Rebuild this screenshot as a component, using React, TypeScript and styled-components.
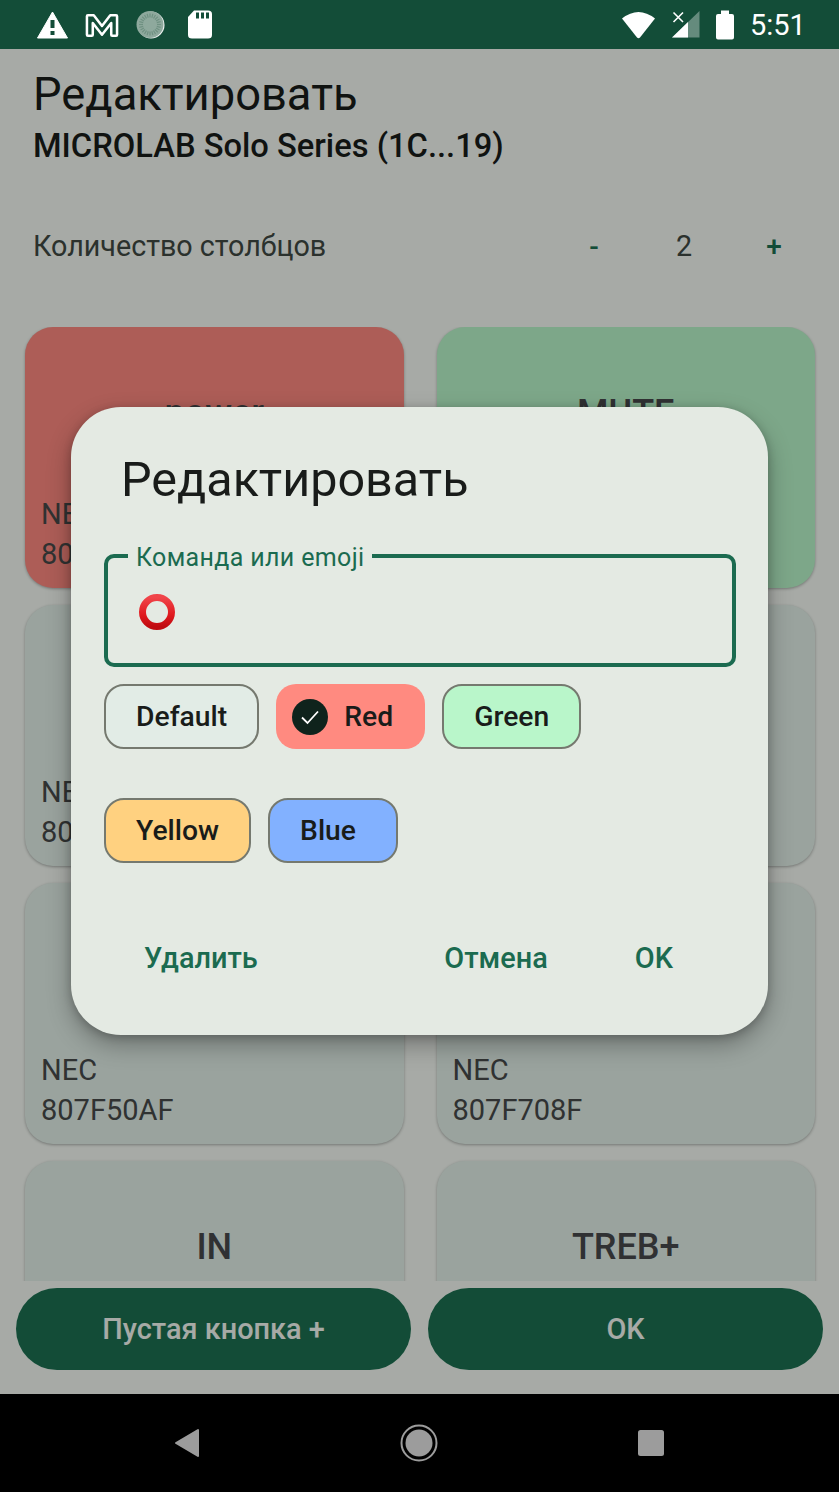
import React from "react";
import styled, { createGlobalStyle } from "styled-components";

const Global = createGlobalStyle`
  html, body { margin: 0; padding: 0; background: #000; }
  body { font-family: Roboto, "Noto Sans", sans-serif; color: #191c1a; }
  * { box-sizing: border-box; }
`;

const Screen = styled.div`
  width: 839px;
  height: 1492px;
  display: flex;
  flex-direction: column;
  overflow: hidden;
`;

const StatusBar = styled.div`
  height: 49px;
  flex: none;
  background: #134d38;
  display: flex;
  align-items: center;
  justify-content: space-between;
  padding: 0 36px 0 37px;
`;

const StatusGroup = styled.div`
  display: flex;
  align-items: center;
  gap: 17px;
`;

const StatusGroupRight = styled(StatusGroup)`
  gap: 16px;
`;

const Clock = styled.span`
  color: #fff;
  font-size: 29px;
  line-height: 34px;
  width: 53px;
  white-space: nowrap;
`;

const Main = styled.main`
  position: relative;
  flex: 1;
  min-height: 0;
  display: flex;
  flex-direction: column;
  background: #f6fbf5;
`;

const Header = styled.header`
  flex: none;
  padding: 18px 20px 61px 33px;
`;

const PageTitle = styled.h1`
  margin: 0;
  font-size: 45.3px;
  line-height: 56px;
  font-weight: 400;
`;

const DeviceName = styled.h2`
  margin: 1px 0 0;
  font-size: 32.7px;
  line-height: 44px;
  font-weight: 500;
`;

const ColumnsRow = styled.div`
  margin-top: 58px;
  display: flex;
  align-items: center;
  justify-content: space-between;
  height: 40px;
`;

const ColumnsLabel = styled.span`
  font-size: 28.7px;
  color: #404943;
`;

const Stepper = styled.div`
  display: grid;
  grid-template-columns: repeat(3, 90px);
  justify-items: center;
  align-items: center;
`;

const StepButton = styled.span`
  font-size: 28px;
  font-weight: 500;
  color: #1c7152;
`;

const StepValue = styled.span`
  font-size: 28.7px;
  color: #404943;
`;

const CardGrid = styled.div`
  flex: 1;
  min-height: 0;
  overflow: hidden;
  display: grid;
  grid-template-columns: 1fr 1fr;
  grid-auto-rows: 261px;
  column-gap: 33px;
  row-gap: 17px;
  padding: 0 24px 0 25px;
`;

const Card = styled.div<{ $bg: string }>`
  background: ${(p) => p.$bg};
  border-radius: 28px;
  box-shadow: 0 1px 3px rgba(0, 0, 0, 0.3);
  display: flex;
  flex-direction: column;
  justify-content: space-between;
  padding: 63px 16px 14px;
`;

const CardTitle = styled.div`
  font-size: 36px;
  line-height: 46px;
  font-weight: 500;
  text-align: center;
  color: #47494c;
`;

const CardMeta = styled.div`
  font-size: 29px;
  line-height: 40px;
  color: #474a4a;
`;

const Footer = styled.footer`
  flex: none;
  display: grid;
  grid-template-columns: 1fr 1fr;
  column-gap: 17px;
  padding: 7px 16px 24px;
`;

const FooterButton = styled.div`
  height: 82px;
  border-radius: 41px;
  background: #1c7152;
  color: #f6fbf5;
  font-size: 28.9px;
  font-weight: 500;
  display: flex;
  align-items: center;
  justify-content: center;
`;

const Scrim = styled.div`
  position: absolute;
  inset: 0;
  padding-bottom: 1px;
  background: rgba(0, 0, 0, 0.32);
  display: flex;
  align-items: center;
  justify-content: center;
`;

const Dialog = styled.section`
  width: 697px;
  height: 628px;
  border-radius: 50px;
  background: #e4eae3;
  box-shadow: 0 10px 24px rgba(0, 0, 0, 0.3), 0 2px 8px rgba(0, 0, 0, 0.2);
  padding: 43px 32px 59px 33px;
  display: flex;
  flex-direction: column;
`;

const DialogTitle = styled.h3`
  margin: 0 0 0 17px;
  font-size: 48.5px;
  line-height: 60px;
  font-weight: 400;
  color: #191c1a;
`;

const Field = styled.fieldset`
  margin: 29px 0 0;
  padding: 20px 0 30px 30px;
  min-width: 0;
  border: 4px solid #1b6b50;
  border-radius: 10px;
  height: 128px;
`;

const FieldLabel = styled.legend`
  margin-left: -10px;
  padding: 4px 8px 0;
  font-size: 25px;
  line-height: 30px;
  color: #1b6b50;
  letter-spacing: 0.35px;
`;

const Chips = styled.div`
  margin-top: 17px;
  display: flex;
  flex-wrap: wrap;
  column-gap: 17px;
  row-gap: 49px;
`;

const Chip = styled.div<{ $bg: string; $selected?: boolean; $minWidth?: number }>`
  height: 65px;
  border-radius: 20px;
  background: ${(p) => p.$bg};
  border: ${(p) => (p.$selected ? "none" : "2px solid #75796f")};
  padding: ${(p) => (p.$selected ? "0 32px 0 16px" : "0 30px")};
  min-width: ${(p) => (p.$minWidth ? `${p.$minWidth}px` : "0")};
  display: flex;
  align-items: center;
  gap: 16px;
  font-size: 28.3px;
  font-weight: 500;
  color: #191c1a;
`;

const Actions = styled.div`
  margin-top: auto;
  display: flex;
  align-items: center;
  gap: 87px;
  padding: 0 63px 0 40px;
`;

const ActionButton = styled.span<{ $pushLeft?: boolean }>`
  font-size: 28.9px;
  line-height: 36px;
  font-weight: 500;
  color: #1b6b50;
  ${(p) => (p.$pushLeft ? "margin-right: auto;" : "")}
`;

const NavBar = styled.nav`
  height: 98px;
  flex: none;
  background: #000;
  display: grid;
  grid-template-columns: 375px 88px 376px;
  align-items: center;
  justify-items: center;
`;

const BackSlot = styled.div`
  justify-self: end;
  margin-right: 175px;
  display: flex;
`;

const HomeSlot = styled.div`
  display: flex;
`;

const RecentSlot = styled.div`
  justify-self: start;
  margin-left: 175px;
  display: flex;
`;

const ticks = Array.from({ length: 24 }, (_, i) => i * 15);

export default function App() {
  return (
    <Screen>
      <Global />
      <StatusBar>
        <StatusGroup>
          <svg width="31" height="28" viewBox="0 0 31 28">
            <path d="M15.5 1 L30.5 27 L0.5 27 Z" fill="#fff" stroke="#fff" strokeLinejoin="round" />
            <rect x="13.5" y="9" width="4" height="8" fill="#134d38" />
            <rect x="13.5" y="20" width="4" height="4" fill="#134d38" />
          </svg>
          <svg width="34" height="26" viewBox="0 0 35 26">
            <path
              d="M3 3 L9 3 L17.5 14 L26 3 L32 3 Q33 3 33 4 L33 23 Q33 24 32 24 L28 24 Q27 24 27 23 L27 11 L17.5 23 L8 11 L8 23 Q8 24 7 24 L3 24 Q2 24 2 23 L2 4 Q2 3 3 3 Z"
              fill="none"
              stroke="#fff"
              strokeWidth="2.6"
              strokeLinejoin="round"
            />
          </svg>
          <svg width="30" height="28" viewBox="0 0 30 28">
            <circle cx="15" cy="14" r="13.5" fill="#fff" opacity="0.95" />
            <circle cx="14" cy="13.5" r="13.5" fill="#8ea99d" />
            {ticks.map((a) => (
              <line
                key={a}
                x1="14"
                y1="2.5"
                x2="14"
                y2="6.5"
                stroke="#6f9182"
                strokeWidth="1.2"
                transform={`rotate(${a} 14 13.5)`}
              />
            ))}
          </svg>
          <svg width="30" height="29" viewBox="0 0 30 29">
            <path
              d="M11 0.5 L25 0.5 Q29 0.5 29 4 L29 25 Q29 28.5 25 28.5 L9 28.5 Q5 28.5 5 25 L5 7 Z"
              fill="#fff"
            />
            <rect x="13" y="2.5" width="3" height="6" fill="#134d38" />
            <rect x="18" y="2.5" width="3" height="6" fill="#134d38" />
            <rect x="23" y="2.5" width="3" height="6" fill="#134d38" />
          </svg>
        </StatusGroup>
        <StatusGroupRight>
          <svg width="35" height="28" viewBox="0 0 35 28">
            <path d="M1 7.5 Q17.5 -5.5 34 7.5 L19 26.5 Q17.5 28 16 26.5 Z" fill="#fff" />
          </svg>
          <svg width="28" height="27" viewBox="0 0 28 27">
            <path d="M0 26.5 L27.5 0 L27.5 26.5 Z" fill="#fff" opacity="0.35" />
            <path d="M0 26.5 L16 11 L16 26.5 Z" fill="#fff" />
            <path d="M1.5 1.5 L11 11 M11 1.5 L1.5 11" stroke="#fff" strokeWidth="1.6" />
          </svg>
          <svg width="18" height="30" viewBox="0 0 18 30">
            <path d="M5 0.5 L13 0.5 L13 4 L16 4 Q18 4 18 6 L18 27.5 Q18 29.5 16 29.5 L2 29.5 Q0 29.5 0 27.5 L0 6 Q0 4 2 4 L5 4 Z" fill="#fff" />
          </svg>
          <Clock>5:51</Clock>
        </StatusGroupRight>
      </StatusBar>

      <Main>
        <Header>
          <PageTitle>Редактировать</PageTitle>
          <DeviceName>MICROLAB Solo Series (1C...19)</DeviceName>
          <ColumnsRow>
            <ColumnsLabel>Количество столбцов</ColumnsLabel>
            <Stepper>
              <StepButton>-</StepButton>
              <StepValue>2</StepValue>
              <StepButton>+</StepButton>
            </Stepper>
          </ColumnsRow>
        </Header>

        <CardGrid>
          <Card $bg="#ff8a80">
            <CardTitle>power</CardTitle>
            <CardMeta>
              NEC
              <br />
              807F
            </CardMeta>
          </Card>
          <Card $bg="#b9f6ca">
            <CardTitle>MUTE</CardTitle>
            <CardMeta>
              NEC
              <br />
              807F
            </CardMeta>
          </Card>
          <Card $bg="#e3f0e9">
            <CardTitle />
            <CardMeta>
              NEC
              <br />
              807F
            </CardMeta>
          </Card>
          <Card $bg="#e3f0e9">
            <CardTitle />
            <CardMeta>
              NEC
              <br />
              807F
            </CardMeta>
          </Card>
          <Card $bg="#e3f0e9">
            <CardTitle />
            <CardMeta>
              NEC
              <br />
              807F50AF
            </CardMeta>
          </Card>
          <Card $bg="#e3f0e9">
            <CardTitle />
            <CardMeta>
              NEC
              <br />
              807F708F
            </CardMeta>
          </Card>
          <Card $bg="#e3f0e9">
            <CardTitle>IN</CardTitle>
          </Card>
          <Card $bg="#e3f0e9">
            <CardTitle>TREB+</CardTitle>
          </Card>
        </CardGrid>

        <Footer>
          <FooterButton>Пустая кнопка +</FooterButton>
          <FooterButton>OK</FooterButton>
        </Footer>

        <Scrim>
          <Dialog>
            <DialogTitle>Редактировать</DialogTitle>
            <Field>
              <FieldLabel>Команда или emoji</FieldLabel>
              <svg width="38" height="38" viewBox="0 0 38 38" style={{ display: "block" }}>
                <defs>
                  <linearGradient id="ring" x1="0" y1="0" x2="0" y2="1">
                    <stop offset="0" stopColor="#f0454a" />
                    <stop offset="0.6" stopColor="#e01a1f" />
                    <stop offset="1" stopColor="#c00b10" />
                  </linearGradient>
                </defs>
                <circle cx="19" cy="19" r="14.5" fill="none" stroke="url(#ring)" strokeWidth="7" />
              </svg>
            </Field>
            <Chips>
              <Chip $bg="#e2ece6">Default</Chip>
              <Chip $bg="#ff8a80" $selected>
                <svg width="36" height="36" viewBox="0 0 36 36">
                  <circle cx="18" cy="18" r="18" fill="#0f231c" />
                  <path d="M10 18.5 L15.5 24 L26 12.5" fill="none" stroke="#fff" strokeWidth="1.8" />
                </svg>
                Red
              </Chip>
              <Chip $bg="#b9f6ca">Green</Chip>
              <Chip $bg="#ffd180">Yellow</Chip>
              <Chip $bg="#82b1ff" $minWidth={130}>
                Blue
              </Chip>
            </Chips>
            <Actions>
              <ActionButton $pushLeft>Удалить</ActionButton>
              <ActionButton>Отмена</ActionButton>
              <ActionButton>OK</ActionButton>
            </Actions>
          </Dialog>
        </Scrim>
      </Main>

      <NavBar>
        <BackSlot>
          <svg width="26" height="30" viewBox="0 0 26 30">
            <path d="M24 2 L24 28 L2 15 Z" fill="#9c9c9c" stroke="#9c9c9c" strokeWidth="2" strokeLinejoin="round" />
          </svg>
        </BackSlot>
        <HomeSlot>
          <svg width="38" height="38" viewBox="0 0 38 38">
            <circle cx="19" cy="19" r="17.5" fill="none" stroke="#9c9c9c" strokeWidth="2" />
            <circle cx="19" cy="19" r="13.5" fill="#9c9c9c" />
          </svg>
        </HomeSlot>
        <RecentSlot>
          <svg width="26" height="26" viewBox="0 0 26 26">
            <rect x="0" y="0" width="26" height="26" rx="2.5" fill="#9c9c9c" />
          </svg>
        </RecentSlot>
      </NavBar>
    </Screen>
  );
}
